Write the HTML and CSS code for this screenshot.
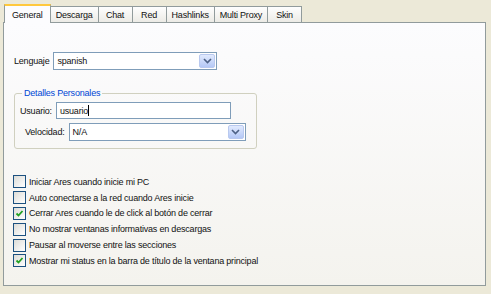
FILE: index.html
```html
<!DOCTYPE html>
<html lang="es">
<head>
    <meta charset="UTF-8">
    <title>Opciones</title>
    <link rel="stylesheet" href="styles.css">
</head>
<body>
    <div class="window">
        <div class="tabs">
            <div class="tab active">General</div>
            <div class="tab">Descarga</div>
            <div class="tab">Chat</div>
            <div class="tab">Red</div>
            <div class="tab">Hashlinks</div>
            <div class="tab">Multi Proxy</div>
            <div class="tab">Skin</div>
        </div>

        <div class="panel">
            <div class="row lang-row">
                <span class="label">Lenguaje</span>
                <div class="select lang-select">
                    <span class="value">spanish</span>
                    <span class="drop"><svg width="9" height="6" viewBox="0 0 9 6"><path d="M1 1 L4.5 4.5 L8 1" fill="none" stroke="#4d6185" stroke-width="1.6"/></svg></span>
                </div>
            </div>

            <fieldset class="group">
                <legend>Detalles Personales</legend>
                <div class="row user-row">
                    <span class="label">Usuario:</span>
                    <div class="input">usuario<span class="caret"></span></div>
                </div>
                <div class="row speed-row">
                    <span class="label">Velocidad:</span>
                    <div class="select speed-select">
                        <span class="value">N/A</span>
                        <span class="drop"><svg width="9" height="6" viewBox="0 0 9 6"><path d="M1 1 L4.5 4.5 L8 1" fill="none" stroke="#4d6185" stroke-width="1.6"/></svg></span>
                    </div>
                </div>
            </fieldset>

            <ul class="checks">
                <li><span class="box"></span>Iniciar Ares cuando inicie mi PC</li>
                <li><span class="box"></span>Auto conectarse a la red cuando Ares inicie</li>
                <li><span class="box checked"><svg width="9" height="9" viewBox="0 0 9 9"><path d="M1.5 4.5 L3.5 6.5 L7.5 2" fill="none" stroke="#21a121" stroke-width="1.8"/></svg></span>Cerrar Ares cuando le de click al botón de cerrar</li>
                <li><span class="box"></span>No mostrar ventanas informativas en descargas</li>
                <li><span class="box"></span>Pausar al moverse entre las secciones</li>
                <li><span class="box checked"><svg width="9" height="9" viewBox="0 0 9 9"><path d="M1.5 4.5 L3.5 6.5 L7.5 2" fill="none" stroke="#21a121" stroke-width="1.8"/></svg></span>Mostrar mi status en la barra de título de la ventana principal</li>
            </ul>
        </div>
    </div>
</body>
</html>
```

FILE: styles.css
```css
body {
    margin: 0;
    background-color: #ece9d8;
    font-family: 'Liberation Sans', Arial, sans-serif;
    font-size: 9px;
    letter-spacing: -0.2px;
    color: #111;
}

.window {
    padding: 3px 5px 6px 3px;
}

.tabs {
    display: flex;
    align-items: flex-end;
    height: 19px;
    padding-left: 1px;
}

.tab {
    min-width: 34px;
    height: 16px;
    line-height: 16px;
    padding: 0 5px;
    text-align: center;
    border: 1px solid #919b9c;
    border-bottom: none;
    border-left: none;
    background: linear-gradient(#fefefe, #ecebe6);
    box-sizing: border-box;
}

.tab.active {
    height: 19px;
    line-height: 19px;
    padding: 0 7px;
    border-top: 2px solid #ffc83c;
    border-left: 1px solid #919b9c;
    background: #fcfcfe;
    margin-bottom: -1px;
    position: relative;
    z-index: 1;
}

.panel {
    height: 264px;
    border: 1px solid #919b9c;
    background: linear-gradient(#fcfcfe, #f4f3ee);
    padding: 29px 0 0 6px;
    box-sizing: border-box;
}

.row {
    display: flex;
    align-items: center;
}

.label {
    margin-right: 4px;
}

.lang-row {
    padding-left: 4px;
}

.select {
    display: flex;
    align-items: center;
    justify-content: space-between;
    height: 18px;
    border: 1px solid #7f9db9;
    background: #fff;
    box-sizing: border-box;
    padding: 0 1px 0 3px;
}

.lang-select {
    width: 164px;
}

.speed-select {
    width: 177px;
}

.drop {
    display: flex;
    align-items: center;
    justify-content: center;
    width: 16px;
    height: 14px;
    border: 1px solid #b9c9ef;
    border-radius: 2px;
    background: linear-gradient(#e1eafe, #b4c8f6);
    box-sizing: border-box;
}

.group {
    width: 243px;
    height: 61px;
    margin: 18px 0 0 4px;
    padding: 4px 0 0 0;
    border: 1px solid #d0d0bf;
    border-radius: 3px;
    box-sizing: border-box;
}

.group legend {
    color: #0046d5;
    padding: 0 2px;
    margin-left: 7px;
}

.user-row {
    padding-left: 5px;
}

.input {
    display: flex;
    align-items: center;
    width: 175px;
    height: 17px;
    border: 1px solid #7f9db9;
    background: #fff;
    box-sizing: border-box;
    padding-left: 3px;
}

.caret {
    display: inline-block;
    width: 1px;
    height: 11px;
    background: #000;
}

.speed-row {
    padding-left: 10px;
    margin-top: 4px;
}

.checks {
    list-style: none;
    margin: 25px 0 0 3px;
    padding: 0;
}

.checks li {
    display: flex;
    align-items: center;
    height: 15.8px;
}

.box {
    display: flex;
    align-items: center;
    justify-content: center;
    width: 13px;
    height: 13px;
    margin-right: 3px;
    border: 1px solid #1c5180;
    background: linear-gradient(135deg, #dcdcd7, #ffffff);
    box-sizing: border-box;
}
```
